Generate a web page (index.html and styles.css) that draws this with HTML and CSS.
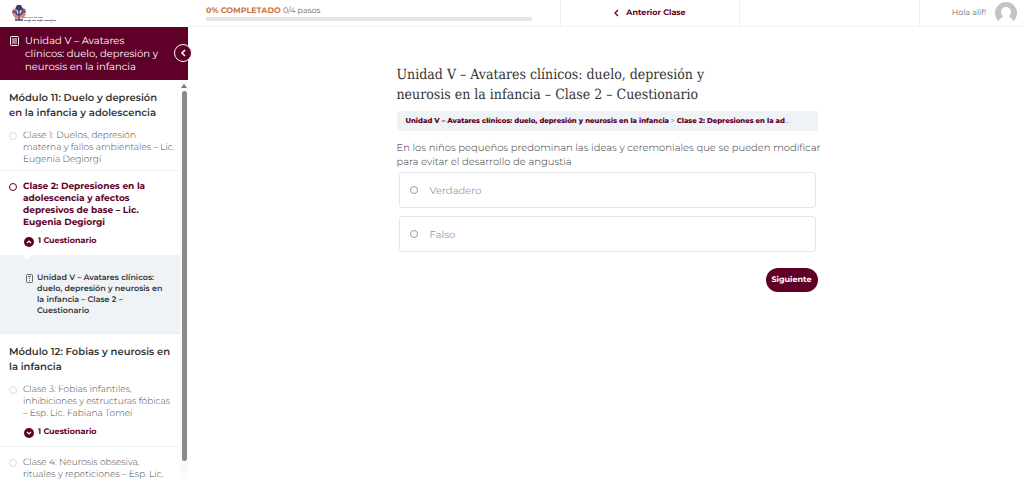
FILE: index.html
```html
<!DOCTYPE html>
<html lang="es">
<head>
    <meta charset="UTF-8">
    <meta name="viewport" content="width=device-width, initial-scale=1.0">
    <title>Unidad V – Cuestionario</title>
    <link rel="stylesheet" href="styles.css">
</head>
<body>
    <div class="layout">
        <aside class="sidebar">
            <a class="logo" href="#" aria-label="Inicio">
                <svg width="48" height="18" viewBox="0 0 48 18">
                    <circle cx="8" cy="8" r="6" fill="#e3d3e2"/>
                    <path d="M2 4l4 2-1 3-4-1zM10 3l4 1 1 4-4 1z" fill="#8a4a7c"/>
                    <path d="M6 0h4l2 4-4 2-4-2z" fill="#3b3a6e"/>
                    <path d="M1 8l4 0 2 4-2 3zM15 9l-4-1-2 4 3 2z" fill="#d98a6a"/>
                    <path d="M8 4v11M5 7c0 4 6 4 6 0M4 15h8" fill="none" stroke="#4a4080" stroke-width="1.500"/>
                    <path d="M13 12.500h20" stroke="#a9a4ad" stroke-dasharray="3 1 5 1"/>
                    <path d="M13 15.500h33" stroke="#8b8690" stroke-dasharray="7 1 4 1 6 1"/>
                    <path d="M19 14l-1 4M30 14l-1 3M41 14l-1 4" stroke="#8d8892" stroke-width=".6"/>
                </svg>
            </a>
            <div class="course">
                <svg class="course-icon" width="9" height="10" viewBox="0 0 9 10" fill="none" stroke="#fff">
                    <rect x=".5" y=".5" width="8" height="9" rx="1"/>
                    <path d="M2 3h5M2 5h5M2 7h5"/>
                </svg>
                <a href="#">Unidad V – Avatares clínicos: duelo, depresión y neurosis en la infancia</a>
                <button class="toggle" aria-label="Ocultar menú">
                    <svg width="6" height="8" viewBox="0 0 6 8"><path d="M5 1L2 4l3 3" fill="none" stroke="#fff" stroke-width="1.600"/></svg>
                </button>
            </div>
            <div class="nav-wrap">
                <nav class="nav">
                    <h2>Módulo 11: Duelo y depresión en la infancia y adolescencia</h2>
                    <div class="lesson">
                        <a class="lesson-link" href="#">
                            <span class="status"></span>
                            <span>Clase 1: Duelos, depresión<br>materna y fallos ambientales – Lic.<br>Eugenia Degiorgi</span>
                        </a>
                    </div>
                    <div class="lesson current">
                        <a class="lesson-link" href="#">
                            <span class="status"></span>
                            <span>Clase 2: Depresiones en la adolescencia y afectos depresivos de base – Lic. Eugenia Degiorgi</span>
                        </a>
                        <button class="expand">
                            <svg width="10" height="10" viewBox="0 0 10 10"><circle cx="5" cy="5" r="5" fill="#5f0028"/><path d="M3 6l2-2 2 2" fill="none" stroke="#fff" stroke-width="1.200"/></svg>
                            1 Cuestionario
                        </button>
                    </div>
                    <div class="quiz-panel">
                        <a class="quiz-link" href="#">
                            <svg width="7" height="9" viewBox="0 0 7 9" fill="none" stroke="#666">
                                <rect x=".5" y=".5" width="6" height="8" rx="1"/>
                                <path d="M2 2.500h3M3.500 4v1M3 6.500h1"/>
                            </svg>
                            <span>Unidad V – Avatares clínicos: duelo, depresión y neurosis en la infancia – Clase 2 – Cuestionario</span>
                        </a>
                    </div>
                    <h2>Módulo 12: Fobias y neurosis en la infancia</h2>
                    <div class="lesson">
                        <a class="lesson-link" href="#">
                            <span class="status"></span>
                            <span>Clase 3: Fobias infantiles,<br>inhibiciones y estructuras fóbicas<br>– Esp. Lic. Fabiana Tomei</span>
                        </a>
                        <button class="expand">
                            <svg width="10" height="10" viewBox="0 0 10 10"><circle cx="5" cy="5" r="5" fill="#5f0028"/><path d="M3 4l2 2 2-2" fill="none" stroke="#fff" stroke-width="1.200"/></svg>
                            1 Cuestionario
                        </button>
                    </div>
                    <div class="lesson">
                        <a class="lesson-link" href="#">
                            <span class="status"></span>
                            <span>Clase 4: Neurosis obsesiva,<br>rituales y repeticiones – Esp. Lic.</span>
                        </a>
                    </div>
                </nav>
                <div class="scrollbar">
                    <span class="scroll-arrow"></span>
                    <span class="scroll-thumb"></span>
                </div>
            </div>
        </aside>
        <div class="page">
            <header class="topbar">
                <div class="progress">
                    <div class="progress-text"><strong>0% COMPLETADO</strong> 0/4 pasos</div>
                    <div class="progress-bar"></div>
                </div>
                <a class="previous" href="#">
                    <svg width="5" height="8" viewBox="0 0 5 8"><path d="M4 1L1 4l3 3" fill="none" stroke="#5f0028" stroke-width="1.300"/></svg>
                    Anterior Clase
                </a>
                <div class="next"></div>
                <div class="user">
                    Hola alif!
                    <svg width="22" height="22" viewBox="0 0 22 22">
                        <path d="M4 19.500a11 11 0 1 1 14 0c0-3-2-3-3.500-4.500c-1-1 1.500-2 1.500-5a5 5 0 0 0-10 0c0 3 2.500 4 1.500 5c-1.500 1.500-3.500 1.500-3.500 4.500z" fill="#c3c3c3"/>
                    </svg>
                </div>
            </header>
            <main class="content">
                <h1>Unidad V – Avatares clínicos: duelo, depresión y neurosis en la infancia – Clase 2 – Cuestionario</h1>
                <div class="breadcrumb">
                    <a href="#">Unidad V – Avatares clínicos: duelo, depresión y neurosis en la infancia</a> &gt; <a href="#">Clase 2: Depresiones en la ad</a>…
                </div>
                <form>
                    <p class="question">En los niños pequeños predominan las ideas y ceremoniales que se pueden modificar para evitar el desarrollo de angustia</p>
                    <label class="option"><input type="radio" name="answer">Verdadero</label>
                    <label class="option"><input type="radio" name="answer">Falso</label>
                    <div class="actions">
                        <button class="submit" type="button">Siguiente</button>
                    </div>
                </form>
            </main>
        </div>
    </div>
</body>
</html>
```
FILE: styles.css
```css
* {
    box-sizing: border-box;
}
body {
    margin: 0;
    font-family: Montserrat, Inter, sans-serif;
    font-size: 9px;
    color: #6a6a6a;
    background-color: #fff;
    text-rendering: geometricPrecision;
}
a {
    color: inherit;
    text-decoration: none;
}
button {
    font-family: inherit;
    text-rendering: inherit;
    border: 0;
    cursor: pointer;
}
svg {
    flex-shrink: 0;
}
.layout {
    display: flex;
    height: 100vh;
    overflow: hidden;
}

/* sidebar */
.sidebar {
    display: flex;
    flex-direction: column;
    width: 188px;
    flex-shrink: 0;
}
.logo {
    display: flex;
    height: 27px;
    padding: 5px 11px;
    flex-shrink: 0;
}
.course {
    position: relative;
    display: flex;
    gap: 6px;
    padding: 7px 24px 7px 10px;
    background-color: #5f0028;
    color: #fff;
    font-size: 10px;
    line-height: 13px;
}
.course-icon {
    margin-top: 2px;
}
.toggle {
    position: absolute;
    top: 17px;
    right: -4px;
    display: flex;
    align-items: center;
    justify-content: center;
    width: 18px;
    height: 18px;
    padding: 0;
    border: 1px solid #fff;
    border-radius: 50%;
    background-color: #5f0028;
}
.nav-wrap {
    display: flex;
    flex: 1;
    min-height: 0;
}
.nav {
    flex: 1;
    overflow: hidden;
}
.nav h2 {
    margin: 0;
    padding: 10px 9px 0;
    font-size: 10px;
    line-height: 15px;
    font-weight: 600;
    color: #333;
}
.lesson {
    padding: 10px 0 4px 9px;
    border-bottom: 1px solid #eef0f2;
}
.lesson:last-child {
    border-bottom: 0;
}
.lesson-link {
    display: flex;
    gap: 6px;
    line-height: 12px;
    font-weight: 300;
    color: #444;
}
.status {
    flex-shrink: 0;
    width: 8px;
    height: 8px;
    margin-top: 2px;
    border: 1px solid #ddd;
    border-radius: 50%;
}
.current {
    padding-right: 10px;
    border-bottom: 0;
}
.current .lesson-link {
    color: #5f0028;
    font-weight: 700;
}
.current .status {
    border-color: #5f0028;
}
.expand {
    display: flex;
    align-items: center;
    gap: 4px;
    margin: 7px 0 4px 15px;
    padding: 0;
    background: none;
    color: #5f0028;
    font-size: 8px;
    line-height: 11px;
    font-weight: 700;
}
.quiz-panel {
    position: relative;
    padding: 18px 16px 16px 26px;
    border-bottom: 1px solid #e8ebee;
    background-color: #eff3f6;
}
.quiz-panel::before {
    content: "";
    position: absolute;
    top: 0;
    left: 22px;
    border: 5px solid transparent;
    border-top: 5px solid #fff;
    border-bottom: 0;
}
.quiz-link {
    display: flex;
    gap: 4px;
    color: #333;
    font-size: 8px;
    line-height: 11px;
    font-weight: 600;
}
.quiz-link svg {
    margin-top: 1px;
}
.scrollbar {
    display: flex;
    flex-direction: column;
    align-items: center;
    gap: 3px;
    width: 8px;
    padding: 4px 0 18px;
    background-color: #fafafa;
}
.scroll-arrow {
    border: 3px solid transparent;
    border-top: 0;
    border-bottom: 4px solid #777;
}
.scroll-thumb {
    flex: 1;
    width: 5px;
    border-radius: 3px;
    background-color: #8a8a8a;
}

/* top bar */
.page {
    flex: 1;
    min-width: 0;
}
.topbar {
    display: grid;
    grid-template-columns: 372fr 179fr 180fr 105fr;
    height: 27px;
    border-bottom: 1px solid #f0f1f3;
}
.progress {
    padding: 5px 28px 0 18px;
    font-size: 8px;
    line-height: 12px;
}
.progress strong {
    color: #d07040;
}
.progress-bar {
    height: 4px;
    border-radius: 1px;
    background-color: #e2e7ed;
}
.previous, .next, .user {
    display: flex;
    align-items: center;
    border-left: 1px solid #eceef0;
}
.previous {
    justify-content: center;
    gap: 7px;
    color: #5f0028;
    font-size: 8px;
    font-weight: 700;
}
.user {
    justify-content: flex-end;
    gap: 9px;
    padding-right: 7px;
    font-size: 8px;
}

/* quiz */
.content {
    max-width: 423px;
    margin: 0 auto;
    padding: 38px 0 0 2px;
}
h1 {
    margin: 0;
    padding-right: 90px;
    font-family: "Roboto Slab", "DejaVu Serif Condensed", "DejaVu Serif", serif;
    font-size: 14px;
    line-height: 20px;
    font-weight: 400;
    color: #333;
}
.breadcrumb {
    margin-top: 6px;
    padding: 0 9px;
    border-radius: 3px;
    background-color: #eff3f6;
    font-size: 7px;
    line-height: 20px;
    white-space: nowrap;
    overflow: hidden;
}
.breadcrumb a {
    color: #5f0028;
    font-weight: 800;
}
.question {
    margin: 10px -12px 3px 0;
    font-size: 10px;
    line-height: 14px;
    font-weight: 300;
    color: #333;
}
.option {
    display: flex;
    align-items: center;
    gap: 12px;
    height: 36px;
    margin: 0 2px 8px;
    padding: 0 10px;
    border: 1px solid #e3e6e8;
    border-radius: 3px;
    font-size: 10px;
    color: #999;
}
.option input {
    appearance: none;
    width: 8px;
    height: 8px;
    margin: 0;
    border: 1px solid #999;
    border-radius: 50%;
}
.actions {
    display: flex;
    justify-content: flex-end;
    margin-top: 16px;
}
.submit {
    height: 24px;
    padding: 0 6px;
    border-radius: 12px;
    background-color: #5f0028;
    color: #fff;
    font-size: 8px;
    font-weight: 700;
}
```
